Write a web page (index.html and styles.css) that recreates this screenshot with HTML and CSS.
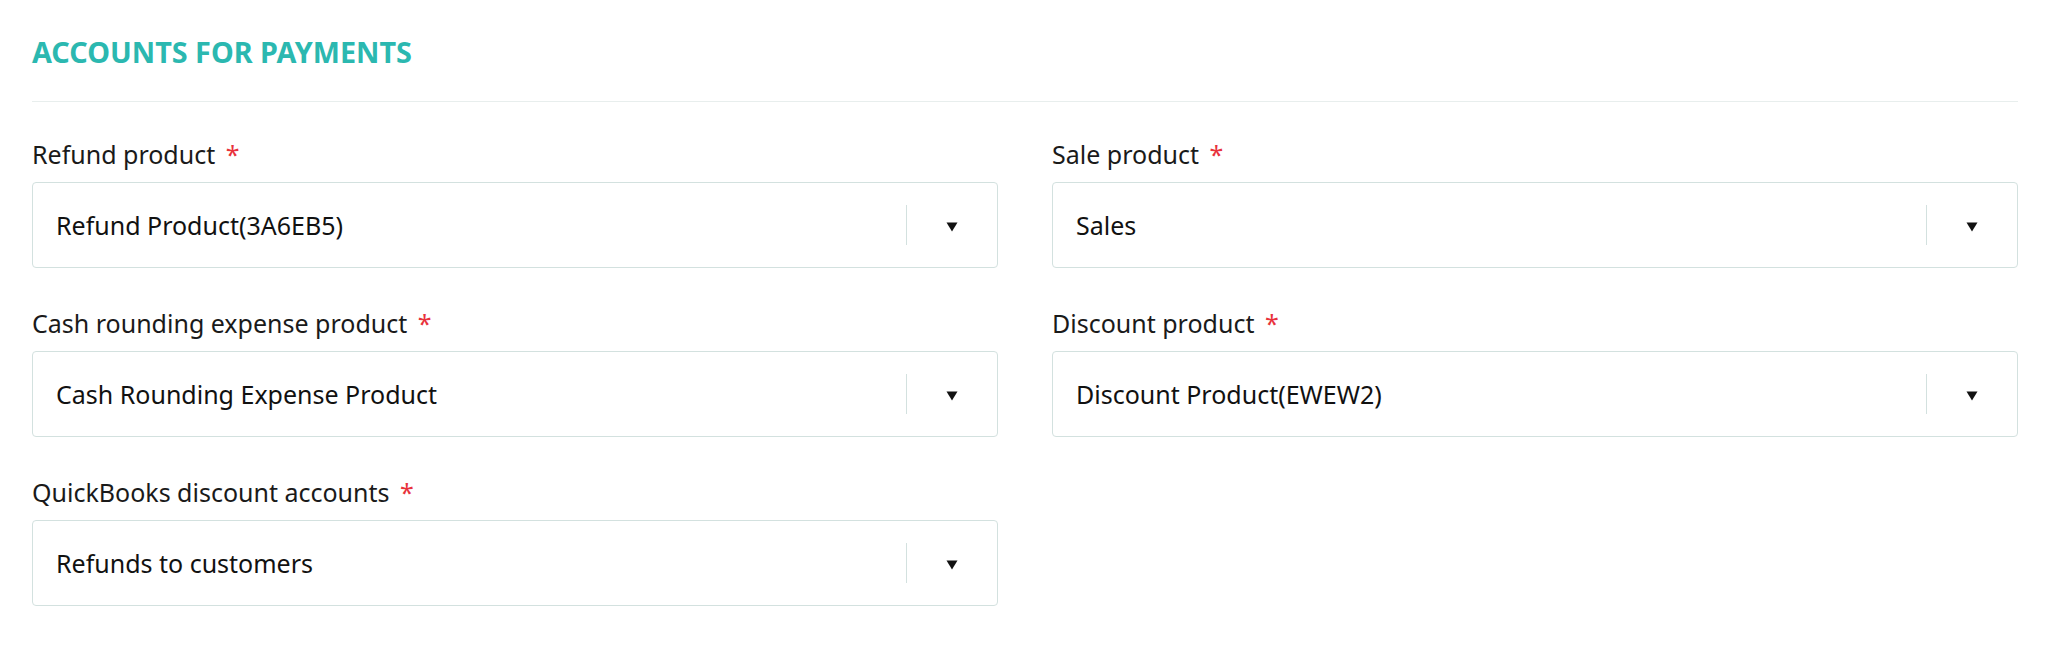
FILE: index.html
```html
<!DOCTYPE html>
<html lang="en">
<head>
<meta charset="utf-8">
<title>Accounts for payments</title>
<link rel="stylesheet" href="styles.css">
</head>
<body>
<section class="page">
  <h2 class="title">ACCOUNTS FOR PAYMENTS</h2>
  <div class="divider"></div>
  <div class="grid">
    <div class="field">
      <label class="label">Refund product <span class="req">*</span></label>
      <div class="select">
        <span class="value">Refund Product(3A6EB5)</span>
        <span class="sep"></span>
        <span class="arrow"><svg width="12" height="10" viewBox="0 0 12 10"><polygon points="0.5,0.5 11.5,0.5 6,9.5" fill="#111"/></svg></span>
      </div>
    </div>
    <div class="field">
      <label class="label">Sale product <span class="req">*</span></label>
      <div class="select">
        <span class="value">Sales</span>
        <span class="sep"></span>
        <span class="arrow"><svg width="12" height="10" viewBox="0 0 12 10"><polygon points="0.5,0.5 11.5,0.5 6,9.5" fill="#111"/></svg></span>
      </div>
    </div>
    <div class="field">
      <label class="label">Cash rounding expense product <span class="req">*</span></label>
      <div class="select">
        <span class="value">Cash Rounding Expense Product</span>
        <span class="sep"></span>
        <span class="arrow"><svg width="12" height="10" viewBox="0 0 12 10"><polygon points="0.5,0.5 11.5,0.5 6,9.5" fill="#111"/></svg></span>
      </div>
    </div>
    <div class="field">
      <label class="label">Discount product <span class="req">*</span></label>
      <div class="select">
        <span class="value">Discount Product(EWEW2)</span>
        <span class="sep"></span>
        <span class="arrow"><svg width="12" height="10" viewBox="0 0 12 10"><polygon points="0.5,0.5 11.5,0.5 6,9.5" fill="#111"/></svg></span>
      </div>
    </div>
    <div class="field">
      <label class="label">QuickBooks discount accounts <span class="req">*</span></label>
      <div class="select">
        <span class="value">Refunds to customers</span>
        <span class="sep"></span>
        <span class="arrow"><svg width="12" height="10" viewBox="0 0 12 10"><polygon points="0.5,0.5 11.5,0.5 6,9.5" fill="#111"/></svg></span>
      </div>
    </div>
  </div>
</section>
</body>
</html>
```

FILE: styles.css
```css
html, body {
  margin: 0;
  padding: 0;
  background: #ffffff;
}

body {
  font-family: "Noto Sans", "Open Sans", "Liberation Sans", sans-serif;
  color: #1a1a1a;
}

.page {
  padding: 32px 36px 0 32px;
  width: 1986px;
}

.title {
  margin: 0;
  font-size: 28.8px;
  line-height: 40px;
  font-weight: 700;
  color: #2bb8b0;
  letter-spacing: 0;
}

.divider {
  margin-top: 29px;
  height: 1px;
  background: #e8eeed;
}

.grid {
  margin-top: 35px;
  display: grid;
  grid-template-columns: 966px 966px;
  column-gap: 54px;
  row-gap: 38px;
}

.field {
  display: flex;
  flex-direction: column;
  gap: 11px;
}

.label {
  font-size: 25px;
  line-height: 34px;
  color: #1a1a1a;
}

.req {
  color: #e8323c;
  margin-left: 4px;
}

.select {
  box-sizing: border-box;
  height: 86px;
  border: 1px solid #d3e1df;
  border-radius: 4px;
  display: flex;
  align-items: center;
}

.value {
  flex: 1;
  padding-left: 23px;
  font-size: 25px;
  line-height: 34px;
  color: #111111;
}

.sep {
  width: 1px;
  height: 40px;
  background: #d3e1df;
}

.arrow {
  width: 90px;
  display: flex;
  justify-content: center;
  align-items: center;
  padding-top: 4px;
}

.arrow svg {
  display: block;
}
```
